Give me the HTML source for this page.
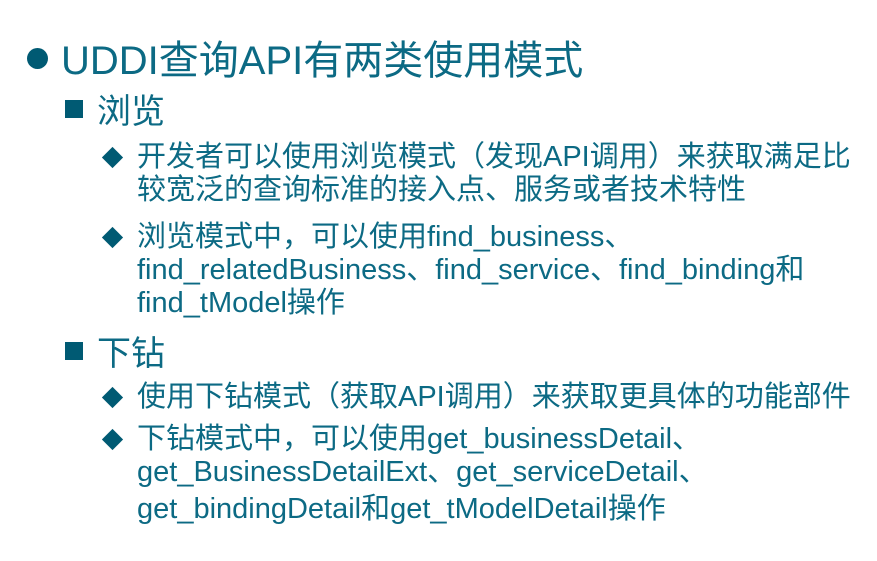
<!DOCTYPE html>
<html><head><meta charset="utf-8"><style>
body{margin:0;width:877px;height:561px;background:#fff;position:relative;overflow:hidden;font-family:"Liberation Sans","Noto Sans CJK SC",sans-serif;color:#0c6a84}
.l{position:absolute;white-space:nowrap;line-height:40px;height:40px}
.t1{font-size:40px;left:61px}
.t2{font-size:34px;left:97px}
.t3{font-size:29px;left:137px}
.dot{position:absolute;left:27px;top:48px;width:21px;height:21px;border-radius:50%;background:#005a73}
.sq{position:absolute;width:18px;height:18px;background:#005a73}
.dm{position:absolute;width:15px;height:15px;background:#005a73;transform:rotate(45deg)}
</style></head><body>
<div class="dot"></div>
<div class="l t1" style="top:41px">UDDI查询API有两类使用模式</div>
<div class="sq" style="left:65px;top:100px"></div>
<div class="l t2" style="top:92px">浏览</div>
<div class="dm" style="left:105px;top:150px"></div>
<div class="l t3" style="top:137px">开发者可以使用浏览模式（发现API调用）来获取满足比</div>
<div class="l t3" style="top:170px">较宽泛的查询标准的接入点、服务或者技术特性</div>
<div class="dm" style="left:105px;top:230px"></div>
<div class="l t3" style="top:217px">浏览模式中，可以使用find_business、</div>
<div class="l t3" style="top:250px">find_relatedBusiness、find_service、find_binding和</div>
<div class="l t3" style="top:283px">find_tModel操作</div>
<div class="sq" style="left:65px;top:342px"></div>
<div class="l t2" style="top:334px">下钻</div>
<div class="dm" style="left:105px;top:390px"></div>
<div class="l t3" style="top:377px">使用下钻模式（获取API调用）来获取更具体的功能部件</div>
<div class="dm" style="left:105px;top:432px"></div>
<div class="l t3" style="top:419px">下钻模式中，可以使用get_businessDetail、</div>
<div class="l t3" style="top:452px">get_BusinessDetailExt、get_serviceDetail、</div>
<div class="l t3" style="top:489px">get_bindingDetail和get_tModelDetail操作</div>
</body></html>
